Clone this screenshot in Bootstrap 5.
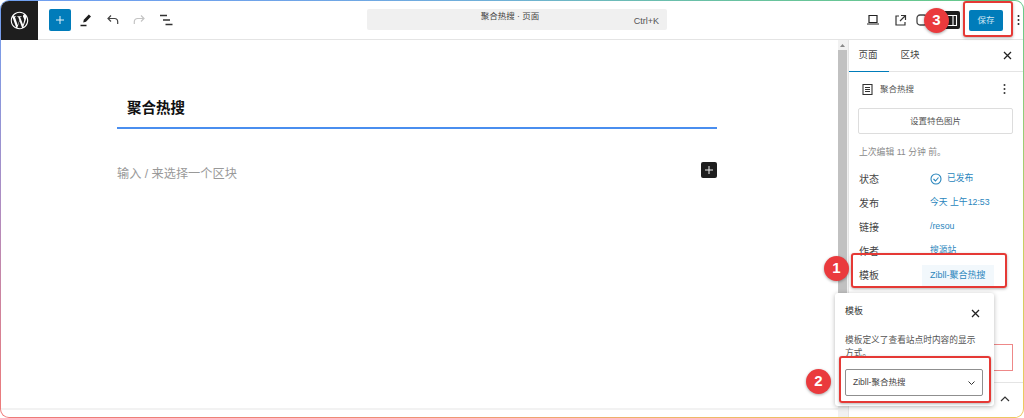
<!doctype html>
<html lang="zh"><head><meta charset="utf-8">
<link href="https://cdn.jsdelivr.net/npm/bootstrap@5.3.0/dist/css/bootstrap.min.css" rel="stylesheet">
<style>
html,body{height:418px;overflow:hidden;background:#fff}
body{font-family:"Liberation Sans","Noto Sans CJK SC",sans-serif;color:#1e1e1e;font-size:9px}
.stage{position:relative;width:1024px;height:418px}
.frame{width:1024px;height:418px;padding:1px;border-radius:9px;overflow:hidden;background:conic-gradient(from 0deg at 50% 50%,#70b2d6 0deg,#66c98a 68deg,#c9cf60 95deg,#eec860 112deg,#f0a070 180deg,#ef7a78 248deg,#b08cc0 270deg,#6f9ff0 292deg,#70b2d6 360deg)}
.shell{width:100%;height:100%;background:#fff;display:flex;flex-direction:column;border-radius:8px;overflow:hidden}
.topbar{height:39px;flex:none;border-bottom:1px solid #e4e4e4;display:flex;align-items:center}
.wplogo{width:37px;height:39px;background:#1e1e1e;display:flex;align-items:center;justify-content:center;flex:none}
.addbtn{width:22px;height:22px;background:#007cba;border-radius:2px;margin-left:11px;margin-right:2px;display:flex;align-items:center;justify-content:center;flex:none}
.tool{display:flex;width:26.5px;justify-content:center;flex:none}
.cmd{width:300px;height:21px;background:#f0f0f0;border-radius:2px;margin-left:188px;margin-bottom:1px;position:relative;flex:none;font-size:8.5px;color:#444;text-align:center;line-height:12px;padding:1px 14px 0 0}
.cmd .kbd{position:absolute;right:8px;top:6px;font-size:9px;color:#555}
.rtools{display:flex;align-items:center;margin-left:auto}
.rtool{display:flex;width:26px;justify-content:center}
.rtool.narrow{width:18px;margin-left:5px}
.rtool.last{margin-right:1px}
.sidetoggle{width:24px;height:18px;background:#1e1e1e;display:flex;align-items:center;justify-content:flex-end;padding-right:2px;border-radius:2px}
.savebtn{width:34px;height:21px;background:#007cba;color:#cfe6f3;border-radius:2px;font-size:8.5px;display:flex;align-items:center;justify-content:center;margin-left:9px}
.dots{width:10px;margin-left:10px;display:flex;justify-content:center}
.main{flex:1;display:flex;min-height:0}
.canvas{flex:1;min-width:0;position:relative;padding-left:116px;padding-top:46px}
.hscroll{position:absolute;left:0;right:0;bottom:7px;height:2px;background:#f2f2f2}
.posttitle{width:600px;height:43px;border-bottom:2px solid #4a8eef;font-size:14.5px;font-weight:700;color:#111;padding:12px 0 0 10px;line-height:20px}
.hint{width:600px;margin-top:36px;color:#999;font-size:12.2px;display:flex;align-items:center;justify-content:space-between;height:18px}
.plusdark{width:16px;height:16px;background:#1e1e1e;border-radius:2px;display:flex;align-items:center;justify-content:center;margin-bottom:9px}
.scrollgutter{width:10px;background:#f1f1f1;flex:none;display:flex;flex-direction:column;align-items:flex-start}
.scrollarrow{width:9px;height:10px;display:flex;align-items:center;justify-content:center}
.scrollthumb{height:246px;width:9px;background:#c1c1c1}
.sidebar{width:175px;border-left:1px solid #e4e4e4;flex:none;position:relative}
.tabsrow{height:32px;border-bottom:1px solid #e4e4e4;display:flex;position:relative;font-size:9.5px;color:#444}
.tabitem{width:42px;display:flex;align-items:center;justify-content:center;height:31px}
.tabitem.on{width:40px;border-bottom:1.5px solid #007cba;padding-right:2px;height:32px}
.closex{position:absolute;right:11px;top:11px}
.docrow{display:flex;align-items:center;padding-left:12px;font-size:8.5px;color:#555;height:34px;position:relative}
.docrow svg{margin-right:6px}
.docrow .vdots{position:absolute;right:17px;top:11px;margin:0}
.setimg{margin:2px 10px 0 9px;height:26px;border:1px solid #ddd;border-radius:2px;display:flex;align-items:center;justify-content:center;font-size:8.5px;color:#555}
.edited{padding:11px 0 0 10px;font-size:8.8px;line-height:14px;color:#8a8a8a;height:33px}
.prow{display:flex;height:24px;align-items:center;padding-left:10px;font-size:10px;color:#444}
.prow .lbl{width:71px;flex:none}
.prow .val{color:#2a86bd;font-size:8.8px;display:flex;align-items:center;gap:5px}
.tplval{background:#f2f8fc;padding:4px 8px;margin-left:-8px;width:72px;white-space:nowrap;color:#2a86bd;font-size:9px;line-height:13px}
.callout{position:absolute;border:2px solid #e53935;border-radius:3px;box-shadow:0 1px 3px rgba(0,0,0,.3);pointer-events:none}
.numdot{position:absolute;width:25px;height:25px;border-radius:50%;background:#ea3a3d;color:#fff;font-size:15px;font-weight:700;display:flex;align-items:center;justify-content:center;box-shadow:0 1px 3px rgba(0,0,0,.35)}
.popup{position:absolute;left:835px;top:293px;width:159px;height:113px;background:#fff;border-radius:3px;box-shadow:0 1px 5px rgba(0,0,0,.28);padding:12px 10px;color:#444}
.pophead{display:flex;justify-content:space-between;font-size:9px;line-height:12px;color:#333}
.popdesc{margin-top:16px;line-height:12.5px;font-size:8.7px;color:#555;max-width:133px}
.tplselect{position:absolute;left:10px;top:76px;width:138px;height:27px;border:1px solid #8f8f8f;border-radius:2px;display:flex;align-items:center;justify-content:space-between;padding:0 7px;font-size:8.5px;color:#444;background:#fff}
.redbtn{position:absolute;left:990px;top:344px;width:23px;height:27px;border:1px solid #e88;border-left:none}
.bottombar{position:absolute;left:849px;top:382px;width:174px;border-top:1px solid #e4e4e4}
.chev{position:absolute;left:1000px;top:396px}
</style></head><body>
<div class="stage">
<div class="frame"><div class="shell">
 <div class="topbar">
  <div class="wplogo"><svg width="21" height="21" viewBox="0 0 24 24" fill="#fff"><path d="M12 2C6.500 2 2 6.500 2 12s4.500 10 10 10 10-4.500 10-10S17.500 2 12 2zM3.200 12c0-1.300.3-2.500.8-3.600l4.200 11.500C5.200 18.500 3.200 15.500 3.200 12zm8.800 8.800c-.9 0-1.700-.1-2.500-.4l2.600-7.700 2.700 7.400c0 0 0 .1.100.1-.9.400-1.900.6-2.900.6zm1.200-12.900c.5 0 1-.1 1-.1.500-.1.400-.7 0-.7 0 0-1.400.1-2.300.1-.9 0-2.300-.1-2.300-.1-.5 0-.5.700 0 .7 0 0 .4.100.9.100l1.400 3.700-1.900 5.800-3.200-9.500c.5 0 1-.1 1-.1.500-.1.400-.7 0-.7 0 0-1.400.1-2.300.1H5.100C6.700 4.700 9.200 3.200 12 3.200c2.100 0 4 .8 5.400 2.100h-.1c-.9 0-1.400.7-1.400 1.500 0 .7.400 1.300.8 2 .3.600.7 1.300.7 2.400 0 .7-.3 1.600-.6 2.700l-.8 2.800-3.300-8.800zm3.100 11.600 2.700-7.800c.5-1.300.7-2.300.7-3.200 0-.3 0-.6-.1-.9.700 1.300 1.100 2.800 1.100 4.400 0 3.200-1.800 6-4.400 7.500z"/></svg></div>
  <div class="addbtn"><svg width="10" height="10" viewBox="0 0 10 10"><path d="M5 1v8M1 5h8" stroke="#e6f2f8" stroke-width="1"/></svg></div>
  <div class="tool"><svg width="16" height="16" viewBox="0 0 16 16"><path d="M10.800 2.500l2.200 2-5 5.300-2.800.8.600-2.900z" fill="#1e1e1e"/><path d="M2.500 13.500h6" stroke="#1e1e1e" stroke-width="1.300"/></svg></div>
  <div class="tool"><svg width="14" height="14" viewBox="0 0 14 14" fill="none" stroke="#444" stroke-width="1.200"><path d="M5 2.500L2 5.500l3 3"/><path d="M2 5.500h6.500a3.200 3.200 0 0 1 3.200 3.200V11"/></svg></div>
  <div class="tool"><svg width="14" height="14" viewBox="0 0 14 14" fill="none" stroke="#c4c4c4" stroke-width="1.200"><path d="M9 2.500l3 3-3 3"/><path d="M12 5.500H5.500A3.200 3.200 0 0 0 2.300 8.700V11"/></svg></div>
  <div class="tool"><svg width="14" height="14" viewBox="0 0 14 14" fill="none" stroke="#333" stroke-width="1.300"><path d="M1 2.500h7M4 7h7M6.500 11.500h7"/></svg></div>
  <div class="cmd">聚合热搜 · 页面<span class="kbd">Ctrl+K</span></div>
  <div class="rtools">
   <div class="rtool"><svg width="14" height="12" viewBox="0 0 14 12" fill="none" stroke="#222" stroke-width="1.200"><path d="M3 1.500h8v7H3z"/><path d="M1 10h12"/></svg></div>
   <div class="rtool narrow"><svg width="13" height="13" viewBox="0 0 13 13" fill="none" stroke="#333" stroke-width="1.200"><path d="M5 2H2v9h9V8"/><path d="M7 1.500h4.500V6M11.500 1.500 6 7"/></svg></div>
   <div class="rtool last"><svg width="12" height="12" viewBox="0 0 12 12" fill="none" stroke="#444" stroke-width="1.300"><rect x="1" y="1" width="10" height="10" rx="3"/></svg></div>
   <div class="sidetoggle"><svg width="13" height="13" viewBox="0 0 13 13" fill="none" stroke="#fff" stroke-width="1.100"><path d="M1.500 1.500h10v10h-10zM8 1.500v10"/></svg></div>
   <div class="savebtn">保存</div>
   <div class="dots"><svg width="3" height="12" viewBox="0 0 3 12" fill="#222"><circle cx="1.500" cy="2" r="1"/><circle cx="1.500" cy="6" r="1"/><circle cx="1.500" cy="10" r="1"/></svg></div>
  </div>
 </div>
 <div class="main">
  <div class="canvas">
   <div class="posttitle">聚合热搜</div>
   <div class="hint"><span>输入 / 来选择一个区块</span><span class="plusdark"><svg width="10" height="10" viewBox="0 0 10 10"><path d="M5 1v8M1 5h8" stroke="#eee" stroke-width="1"/></svg></span></div>
   <div class="hscroll"></div>
  </div>
  <div class="scrollgutter"><div class="scrollarrow"><svg width="5" height="3" viewBox="0 0 5 3" fill="#888"><path d="M2.500 0L5 3H0z"/></svg></div><div class="scrollthumb"></div></div>
  <div class="sidebar">
   <div class="tabsrow"><div class="tabitem on">页面</div><div class="tabitem">区块</div><svg class="closex" width="9" height="9" viewBox="0 0 9 9"><path d="M1 1l7 7M8 1l-7 7" stroke="#222" stroke-width="1.300"/></svg></div>
   <div class="docrow"><svg width="13" height="13" viewBox="0 0 13 13" fill="none" stroke="#333" stroke-width="1.100"><path d="M2 1.500h9v10H2zM4 4.500h5M4 6.500h5M4 8.500h5"/></svg>聚合热搜<svg class="vdots" width="3" height="12" viewBox="0 0 3 12" fill="#333"><circle cx="1.500" cy="2" r="1"/><circle cx="1.500" cy="6" r="1"/><circle cx="1.500" cy="10" r="1"/></svg></div>
   <div class="setimg">设置特色图片</div>
   <div class="edited">上次编辑 11 分钟 前。</div>
   <div class="prow"><span class="lbl">状态</span><span class="val"><svg width="12" height="12" viewBox="0 0 12 12" fill="none" stroke="#2a86bd" stroke-width="1.100"><circle cx="6" cy="6" r="5"/><path d="M3.500 6l2 2 3-3.500"/></svg>已发布</span></div>
   <div class="prow"><span class="lbl">发布</span><span class="val">今天 上午12:53</span></div>
   <div class="prow"><span class="lbl">链接</span><span class="val">/resou</span></div>
   <div class="prow"><span class="lbl">作者</span><span class="val">搜源站</span></div>
   <div class="prow"><span class="lbl">模板</span><span class="tplval">Zibll-聚合热搜</span></div>
  </div>
 </div>
</div></div>
<div class="redbtn"></div>
<div class="bottombar"></div>
<svg class="chev" width="10" height="6" viewBox="0 0 10 6" fill="none" stroke="#333" stroke-width="1.200"><path d="M1 5l4-4 4 4"/></svg>
<div class="popup">
 <div class="pophead"><span>模板</span><svg width="9" height="9" viewBox="0 0 9 9" class="mt-1 me-1"><path d="M1 1l7 7M8 1l-7 7" stroke="#222" stroke-width="1.300"/></svg></div>
 <div class="popdesc">模板定义了查看站点时内容的显示方式。</div>
 <div class="tplselect"><span>Zibll-聚合热搜</span><svg width="7" height="4" viewBox="0 0 7 4" fill="none" stroke="#333" stroke-width="1"><path d="M.5.500l3 3 3-3"/></svg></div>
</div>
<div class="callout" style="left:851px;top:253px;width:156px;height:35px"></div>
<div class="callout" style="left:839px;top:356px;width:152px;height:47px"></div>
<div class="callout" style="left:963px;top:1px;width:50px;height:36px"></div>
<div class="numdot" style="left:824px;top:256px">1</div>
<div class="numdot" style="left:806px;top:369px">2</div>
<div class="numdot" style="left:924px;top:8px">3</div>
</div>
</body></html>
